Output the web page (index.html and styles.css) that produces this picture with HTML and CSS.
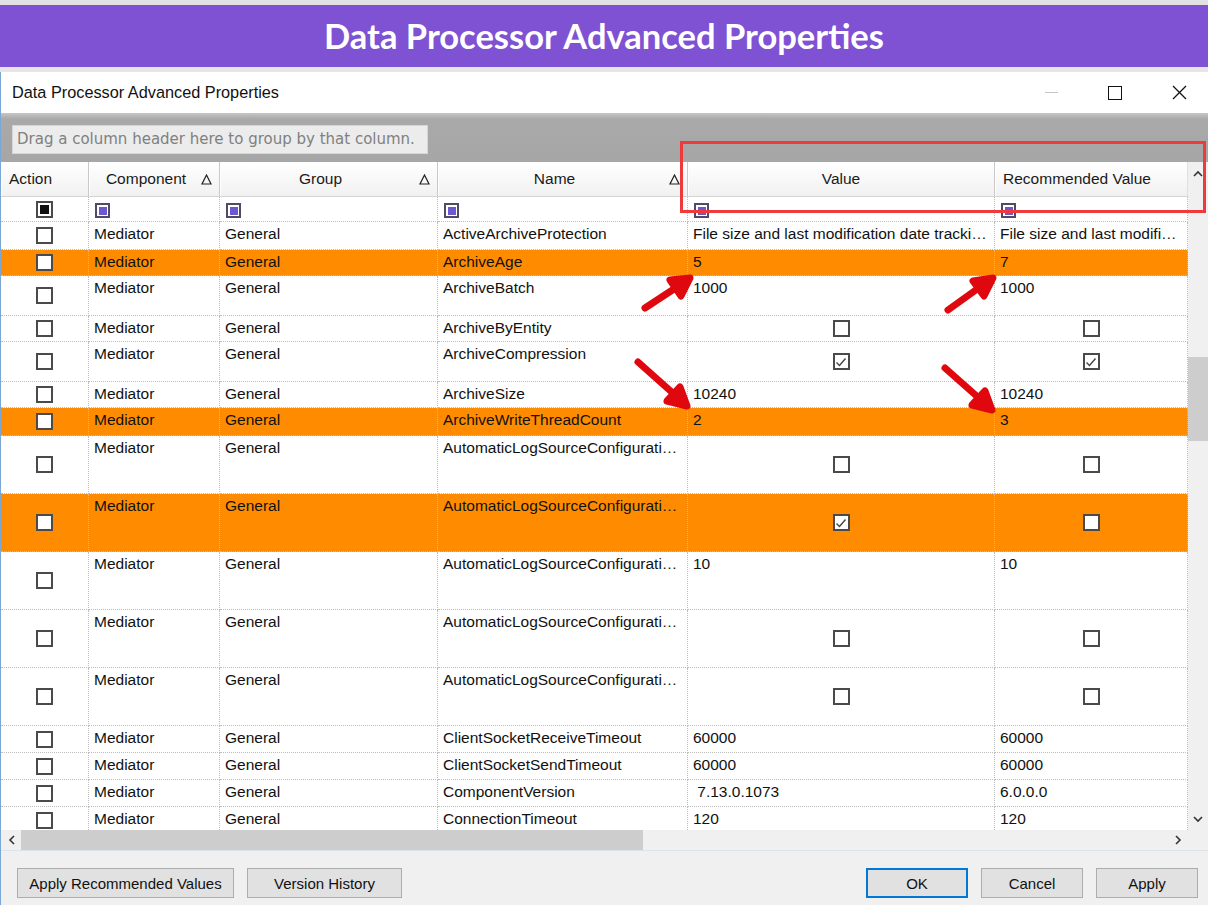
FILE: index.html
```html
<!DOCTYPE html>
<html>
<head>
<meta charset="utf-8">
<link rel="stylesheet" href="styles.css">
</head>
<body>
<div class="page">
  <div class="topstrip"></div>
  <header class="banner">Data Processor Advanced Properties</header>
  <div class="gap"></div>
  <div class="window">
    <div class="titlebar">
      <span class="wtitle">Data Processor Advanced Properties</span>
      <div class="wctrls">
        <span class="wbtn"><span class="minline"></span></span>
        <span class="wbtn"><span class="maxbox"></span></span>
        <span class="wbtn">
          <svg width="15" height="15" viewBox="0 0 15 15"><path d="M1 1L14 14M14 1L1 14" stroke="#111" stroke-width="1.3" fill="none"/></svg>
        </span>
      </div>
    </div>
    <div class="grouppanel">
      <div class="groupbox">Drag a column header here to group by that column.</div>
    </div>
    <div class="gridwrap">
      <div class="grid">
        <div class="hrow cols">
          <div class="hc hc-left">Action</div>
          <div class="hc hc-sort">Component<span class="sort"><svg width="11" height="11" viewBox="0 0 11 11"><path d="M5.5 1L10 10H1Z" fill="none" stroke="#222" stroke-width="1.2"/></svg></span></div>
          <div class="hc hc-sort">Group<span class="sort"><svg width="11" height="11" viewBox="0 0 11 11"><path d="M5.5 1L10 10H1Z" fill="none" stroke="#222" stroke-width="1.2"/></svg></span></div>
          <div class="hc hc-sort">Name<span class="sort"><svg width="11" height="11" viewBox="0 0 11 11"><path d="M5.5 1L10 10H1Z" fill="none" stroke="#222" stroke-width="1.2"/></svg></span></div>
          <div class="hc">Value</div>
          <div class="hc hc-rec">Recommended Value</div>
        </div>
        <div class="frow cols">
          <div class="c cb"><span class="fblack"></span></div>
          <div class="c fc"><span class="fpurple"></span></div>
          <div class="c fc"><span class="fpurple"></span></div>
          <div class="c fc"><span class="fpurple"></span></div>
          <div class="c fc"><span class="fpurple"></span></div>
          <div class="c fc"><span class="fpurple"></span></div>
        </div>

        <div class="row cols h28">
          <div class="c cb"><span class="chk"></span></div>
          <div class="c">Mediator</div><div class="c">General</div><div class="c">ActiveArchiveProtection</div>
          <div class="c">File size and last modification date tracking enabled</div>
          <div class="c">File size and last modification date tracking enabled</div>
        </div>
        <div class="row cols h26 hl">
          <div class="c cb"><span class="chk"></span></div>
          <div class="c">Mediator</div><div class="c">General</div><div class="c">ArchiveAge</div>
          <div class="c">5</div><div class="c">7</div>
        </div>
        <div class="row cols h40">
          <div class="c cb"><span class="chk"></span></div>
          <div class="c">Mediator</div><div class="c">General</div><div class="c">ArchiveBatch</div>
          <div class="c">1000</div><div class="c">1000</div>
        </div>
        <div class="row cols h26">
          <div class="c cb"><span class="chk"></span></div>
          <div class="c">Mediator</div><div class="c">General</div><div class="c">ArchiveByEntity</div>
          <div class="c cb"><span class="chk"></span></div><div class="c cb"><span class="chk"></span></div>
        </div>
        <div class="row cols h40">
          <div class="c cb"><span class="chk"></span></div>
          <div class="c">Mediator</div><div class="c">General</div><div class="c">ArchiveCompression</div>
          <div class="c cb"><span class="chk on"><svg width="12" height="12" viewBox="0 0 12 12"><path d="M1.5 6.5L4.5 9.5L10.5 2.5" fill="none" stroke="#444" stroke-width="1.4"/></svg></span></div>
          <div class="c cb"><span class="chk on"><svg width="12" height="12" viewBox="0 0 12 12"><path d="M1.5 6.5L4.5 9.5L10.5 2.5" fill="none" stroke="#444" stroke-width="1.4"/></svg></span></div>
        </div>
        <div class="row cols h26">
          <div class="c cb"><span class="chk"></span></div>
          <div class="c">Mediator</div><div class="c">General</div><div class="c">ArchiveSize</div>
          <div class="c">10240</div><div class="c">10240</div>
        </div>
        <div class="row cols h28 hl">
          <div class="c cb"><span class="chk"></span></div>
          <div class="c">Mediator</div><div class="c">General</div><div class="c">ArchiveWriteThreadCount</div>
          <div class="c">2</div><div class="c">3</div>
        </div>
        <div class="row cols h58">
          <div class="c cb"><span class="chk"></span></div>
          <div class="c">Mediator</div><div class="c">General</div><div class="c">AutomaticLogSourceConfigurationEnabled</div>
          <div class="c cb"><span class="chk"></span></div><div class="c cb"><span class="chk"></span></div>
        </div>
        <div class="row cols h58 hl">
          <div class="c cb"><span class="chk"></span></div>
          <div class="c">Mediator</div><div class="c">General</div><div class="c">AutomaticLogSourceConfigurationAutoAccept</div>
          <div class="c cb"><span class="chk on"><svg width="12" height="12" viewBox="0 0 12 12"><path d="M1.5 6.5L4.5 9.5L10.5 2.5" fill="none" stroke="#444" stroke-width="1.4"/></svg></span></div>
          <div class="c cb"><span class="chk"></span></div>
        </div>
        <div class="row cols h58">
          <div class="c cb"><span class="chk"></span></div>
          <div class="c">Mediator</div><div class="c">General</div><div class="c">AutomaticLogSourceConfigurationThreshold</div>
          <div class="c">10</div><div class="c">10</div>
        </div>
        <div class="row cols h58">
          <div class="c cb"><span class="chk"></span></div>
          <div class="c">Mediator</div><div class="c">General</div><div class="c">AutomaticLogSourceConfigurationLearn</div>
          <div class="c cb"><span class="chk"></span></div><div class="c cb"><span class="chk"></span></div>
        </div>
        <div class="row cols h58">
          <div class="c cb"><span class="chk"></span></div>
          <div class="c">Mediator</div><div class="c">General</div><div class="c">AutomaticLogSourceConfigurationDisable</div>
          <div class="c cb"><span class="chk"></span></div><div class="c cb"><span class="chk"></span></div>
        </div>
        <div class="row cols h27">
          <div class="c cb"><span class="chk"></span></div>
          <div class="c">Mediator</div><div class="c">General</div><div class="c">ClientSocketReceiveTimeout</div>
          <div class="c">60000</div><div class="c">60000</div>
        </div>
        <div class="row cols h27">
          <div class="c cb"><span class="chk"></span></div>
          <div class="c">Mediator</div><div class="c">General</div><div class="c">ClientSocketSendTimeout</div>
          <div class="c">60000</div><div class="c">60000</div>
        </div>
        <div class="row cols h27">
          <div class="c cb"><span class="chk"></span></div>
          <div class="c">Mediator</div><div class="c">General</div><div class="c">ComponentVersion</div>
          <div class="c">&nbsp;7.13.0.1073</div><div class="c">6.0.0.0</div>
        </div>
        <div class="row cols h27">
          <div class="c cb"><span class="chk"></span></div>
          <div class="c">Mediator</div><div class="c">General</div><div class="c">ConnectionTimeout</div>
          <div class="c">120</div><div class="c">120</div>
        </div>
      </div>
      <div class="vscroll">
        <span class="sarrow"><svg width="10" height="7" viewBox="0 0 10 7"><path d="M1 6L5 2L9 6" fill="none" stroke="#333" stroke-width="1.6"/></svg></span>
        <div class="vtrack"><div class="vthumb"></div></div>
        <span class="sarrow"><svg width="10" height="7" viewBox="0 0 10 7"><path d="M1 1L5 5L9 1" fill="none" stroke="#333" stroke-width="1.6"/></svg></span>
      </div>
    </div>
    <div class="hscrollbar">
      <div class="hscroll">
        <span class="harrow"><svg width="7" height="10" viewBox="0 0 7 10"><path d="M6 1L2 5L6 9" fill="none" stroke="#333" stroke-width="1.6"/></svg></span>
        <div class="htrack"><div class="hthumb"></div></div>
        <span class="harrow"><svg width="7" height="10" viewBox="0 0 7 10"><path d="M1 1L5 5L1 9" fill="none" stroke="#333" stroke-width="1.6"/></svg></span>
      </div>
      <div class="corner"></div>
    </div>
    <div class="footer">
      <div class="fgroup">
        <button class="btn btn-wide">Apply Recommended Values</button>
        <button class="btn btn-mid">Version History</button>
      </div>
      <div class="fgroup">
        <button class="btn btn-ok">OK</button>
        <button class="btn">Cancel</button>
        <button class="btn">Apply</button>
      </div>
    </div>
  </div>
  <div class="redbox"></div>
  <svg class="arrows" width="1208" height="905" viewBox="0 0 1208 905">
    <g stroke="#e0080f" stroke-width="7" stroke-linecap="round" stroke-linejoin="round" fill="#e0080f">
      <line x1="645" y1="308" x2="677" y2="287"/>
      <polygon points="690,278 681,296 670,280"/>
      <line x1="948" y1="310" x2="980" y2="287"/>
      <polygon points="993,278 984,296 973,281"/>
      <line x1="638" y1="362" x2="675" y2="395"/>
      <polygon points="687,406 667,401 680,387"/>
      <line x1="945" y1="368" x2="980" y2="399"/>
      <polygon points="992,410 972,405 985,391"/>
    </g>
  </svg>
</div>
</body>
</html>
```

FILE: styles.css
```css
* { box-sizing: border-box; }
html, body { margin: 0; padding: 0; }
body {
  width: 1208px;
  height: 905px;
  overflow: hidden;
  background: #e4e4e4;
  font-family: "Liberation Sans", Arial, sans-serif;
}
.page {
  position: relative;
  width: 1208px;
  height: 905px;
  display: flex;
  flex-direction: column;
}
.topstrip { height: 5px; background: #e2e2e2; }
.banner {
  height: 62px;
  background: #7f51d3;
  color: #fff;
  font-family: "Lato", "Open Sans", sans-serif;
  font-weight: 700;
  font-size: 34.5px;
  display: flex;
  align-items: center;
  justify-content: center;
  padding-bottom: 2px;
}
.gap { height: 5px; background: #e6e6e6; }
.window {
  flex: 1;
  display: flex;
  flex-direction: column;
  background: #f0f0f0;
  border-left: 1px solid #7aa7d6;
}
.titlebar {
  height: 41px;
  background: #fff;
  display: flex;
  align-items: center;
  justify-content: space-between;
  padding-left: 11px;
}
.wtitle { font-size: 16.3px; color: #111; }
.wctrls { display: flex; height: 100%; margin-right: -3px; }
.wbtn {
  width: 64px;
  display: flex;
  align-items: center;
  justify-content: center;
}
.minline { width: 13px; height: 1px; background: #c4c4c4; }
.maxbox { width: 14px; height: 14px; border: 1.3px solid #111; }

.grouppanel {
  height: 49px;
  background: linear-gradient(#c6c6c6 0, #a9a9a9 6px, #a6a6a6 100%);
  padding: 12px 0 0 11px;
}
.groupbox {
  width: 416px;
  height: 29px;
  background: #ececec;
  border: 1px solid #d6d6d6;
  color: #808080;
  font-family: "DejaVu Sans", Verdana, sans-serif;
  font-size: 15px;
  line-height: 27px;
  padding-left: 4px;
  white-space: nowrap;
}

.gridwrap {
  height: 668px;
  display: flex;
  background: #fff;
}
.grid {
  width: 1187px;
  overflow: hidden;
  font-size: 15.5px;
  color: #111;
}
.cols {
  display: grid;
  grid-template-columns: 88px 131px 218px 250px 307px 193px;
}
.hrow {
  height: 35px;
  background: linear-gradient(#ffffff, #f1f1f1);
  border-bottom: 1px solid #d4d4d4;
}
.hc {
  position: relative;
  display: flex;
  align-items: center;
  justify-content: center;
  border-right: 1px solid #c9c9c9;
  box-shadow: inset 1px 0 0 #ffffff;
  color: #1a1a1a;
  white-space: nowrap;
  overflow: hidden;
}
.hc-sort { padding-right: 16px; }
.hc-left { justify-content: flex-start; padding-left: 8px; }
.hc-rec { padding-right: 28px; border-right: 1px solid #e0e0e0; }
.sort {
  position: absolute;
  right: 7px;
  top: 12px;
  display: flex;
}
.frow { height: 25px; }
.row.h26 { height: 26px; }
.row.h27 { height: 27px; }
.row.h28 { height: 28px; }
.row.h40 { height: 40px; }
.row.h58 { height: 58px; }
.row.hl { background: #ff8c00; }
.c {
  border-right: 1px dotted #bdbdbd;
  border-bottom: 1px dotted #bdbdbd;
  padding: 3px 4px 0 5px;
  line-height: 18px;
  white-space: nowrap;
  overflow: hidden;
  text-overflow: ellipsis;
}
.c.cb {
  display: flex;
  align-items: center;
  justify-content: center;
  padding: 0;
}
.c.fc { padding: 6px 0 0 6px; }
.chk {
  width: 17px;
  height: 17px;
  border: 2px solid #4a4a4a;
  background: #fff;
  display: flex;
  align-items: center;
  justify-content: center;
}
.fblack {
  width: 17px;
  height: 17px;
  border: 2px solid #4a4a4a;
  background: #fff;
  display: flex;
  align-items: center;
  justify-content: center;
}
.fblack::after {
  content: "";
  width: 9px;
  height: 9px;
  background: #111;
}
.fpurple {
  width: 15px;
  height: 15px;
  border: 2px solid #4c4c66;
  background: #fff;
  display: flex;
  align-items: center;
  justify-content: center;
}
.fpurple::after {
  content: "";
  width: 8px;
  height: 8px;
  background: #6d58d0;
}

.vscroll {
  width: 20px;
  background: #f0f0f0;
  display: flex;
  flex-direction: column;
}
.sarrow {
  height: 22px;
  display: flex;
  align-items: center;
  justify-content: center;
}
.vtrack { flex: 1; padding-top: 173px; }
.vthumb { width: 20px; height: 84px; background: #cdcdcd; }

.hscrollbar { height: 21px; display: flex; border-bottom: 1px solid #dde3ea; }
.hscroll {
  width: 1187px;
  display: flex;
  background: #f0f0f0;
}
.harrow {
  width: 20px;
  display: flex;
  align-items: center;
  justify-content: center;
}
.htrack { flex: 1; }
.hthumb { width: 622px; height: 100%; background: #cdcdcd; }
.corner { flex: 1; background: #f0f0f0; }

.footer {
  flex: 1;
  display: flex;
  justify-content: space-between;
  padding: 17px 10px 0 16px;
}
.fgroup { display: flex; gap: 13px; align-items: flex-start; }
.btn {
  height: 30px;
  width: 102px;
  background: #e1e1e1;
  border: 1px solid #adadad;
  font-family: "Liberation Sans", Arial, sans-serif;
  font-size: 15px;
  color: #111;
  padding: 0;
  margin: 0;
}
.btn-wide { width: 217px; }
.btn-mid { width: 155px; }
.btn-ok { border: 2px solid #0078d7; }

.redbox {
  position: absolute;
  left: 680px;
  top: 141px;
  width: 526px;
  height: 72px;
  border: 3px solid #ef3a3d;
}
.arrows {
  position: absolute;
  left: 0;
  top: 0;
  pointer-events: none;
}
```
